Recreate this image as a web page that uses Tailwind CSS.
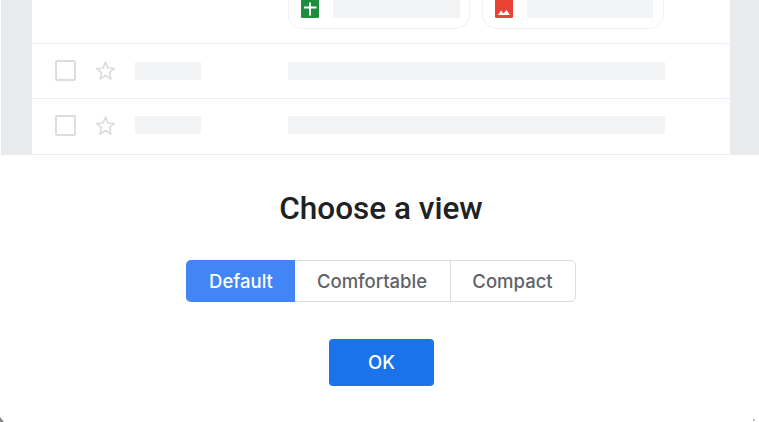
<!DOCTYPE html>
<html lang="en">
<head>
    <meta charset="UTF-8">
    <meta name="viewport" content="width=device-width, initial-scale=1.0">
    <title>Choose a view</title>
    <script src="https://cdn.jsdelivr.net/npm/@tailwindcss/browser@4"></script>
</head>
<body class="bg-white font-['Roboto',sans-serif]">
    <div class="relative w-[759px] h-[422px] overflow-hidden bg-white">

        <!-- Inbox preview -->
        <div class="h-[155px] ml-px flex border-b border-[#ececee]">
            <div class="w-[31px] bg-[#e8eaed]"></div>
            <div class="w-[698px] bg-white">

                <!-- Row with attachment chips -->
                <div class="h-[44px] border-b border-[#eeeff0] flex items-start pl-[256px] gap-3">
                    <div class="w-[182px] h-[29px] border border-[#f0f1f2] border-t-0 rounded-b-[15px] flex items-start pl-3 gap-[14px]">
                        <svg class="w-[18px] h-[18px] shrink-0" viewBox="0 0 18 18">
                            <path d="M0 0H18V16.500A1.500 1.500 0 0 1 16.500 18H1.500A1.500 1.500 0 0 1 0 16.500Z" fill="#1e8e3e"/>
                            <path d="M3 6.500H8V2.500H10V6.500H15.500V8.500H10V15.500H8V8.500H3Z" fill="#fff"/>
                        </svg>
                        <div class="w-[127px] h-[18px] bg-[#f1f3f4]"></div>
                    </div>
                    <div class="w-[182px] h-[29px] border border-[#f0f1f2] border-t-0 rounded-b-[15px] flex items-start pl-3 gap-[14px]">
                        <svg class="w-[18px] h-[18px] shrink-0" viewBox="0 0 18 18">
                            <path d="M0 0H18V16.500A1.500 1.500 0 0 1 16.500 18H1.500A1.500 1.500 0 0 1 0 16.500Z" fill="#ea4335"/>
                            <path d="M3 15L6 10.500L8.500 13.500L11.500 10L15 15Z" fill="#fff"/>
                        </svg>
                        <div class="w-[126px] h-[18px] bg-[#f1f3f4]"></div>
                    </div>
                </div>

                <!-- Placeholder message rows -->
                <div class="h-[55px] border-b border-[#eeeff0] flex items-center pl-[23px] pb-px">
                    <div class="w-[21px] h-[21px] border-2 border-[#dcdddf] rounded-[2px] shrink-0"></div>
                    <svg class="w-[23px] h-[23px] ml-[18px] shrink-0" viewBox="0 0 24 24" fill="none" stroke="#dcdddf" stroke-width="1.800" stroke-linejoin="round">
                        <path d="M12 3.200L14.500 9.400L21.200 9.900L16.100 14.200L17.700 20.800L12 17.200L6.300 20.800L7.900 14.200L2.800 9.900L9.500 9.400Z"/>
                    </svg>
                    <div class="w-[66px] h-[18px] ml-[18px] bg-[#f1f3f4] shrink-0"></div>
                    <div class="w-[377px] h-[18px] ml-[87px] bg-[#f1f3f4] shrink-0"></div>
                </div>
                <div class="h-[55px] flex items-center pl-[23px] pb-[3px]">
                    <div class="w-[21px] h-[21px] border-2 border-[#dcdddf] rounded-[2px] shrink-0"></div>
                    <svg class="w-[23px] h-[23px] ml-[18px] shrink-0" viewBox="0 0 24 24" fill="none" stroke="#dcdddf" stroke-width="1.800" stroke-linejoin="round">
                        <path d="M12 3.200L14.500 9.400L21.200 9.900L16.100 14.200L17.700 20.800L12 17.200L6.300 20.800L7.900 14.200L2.800 9.900L9.500 9.400Z"/>
                    </svg>
                    <div class="w-[66px] h-[18px] ml-[18px] bg-[#f1f3f4] shrink-0"></div>
                    <div class="w-[377px] h-[18px] ml-[87px] bg-[#f1f3f4] shrink-0"></div>
                </div>
            </div>
            <div class="flex-1 bg-[#e8eaed]"></div>
        </div>

        <!-- Dialog -->
        <div class="flex flex-col items-center pl-[2px]">
            <h2 class="mt-[36px] ml-px h-[36px] leading-[36px] text-[31.500px] font-medium text-[#202124]">Choose a view</h2>
            <div class="mt-[33px] w-[390px] h-[42px] flex border border-[#dadce0] rounded-[5px] text-[18.500px] font-medium font-['Inter',sans-serif] text-[#5f6368]">
                <div class="w-[109px] -my-px -ml-px bg-[#4285f4] text-white rounded-l-[5px] flex items-center justify-center pt-px pl-[2px]">Default</div>
                <div class="w-[156px] border-r border-[#dadce0] flex items-center justify-center pt-px">Comfortable</div>
                <div class="flex-1 flex items-center justify-center pt-px">Compact</div>
            </div>
            <button class="mt-[37px] ml-[2px] w-[105px] h-[47px] bg-[#1a73e8] text-white rounded-[4px] text-[18.500px] font-medium font-['Inter',sans-serif]">OK</button>
        </div>

        <!-- Window corner marks -->
        <div class="absolute left-0 bottom-0 w-[4px] h-[5px] bg-[#888] [clip-path:polygon(0_0,100%_100%,0_100%)]"></div>
        <div class="absolute right-[4px] bottom-[1px] w-[2px] h-[2px] bg-[#bbb]"></div>
    </div>
</body>
</html>
